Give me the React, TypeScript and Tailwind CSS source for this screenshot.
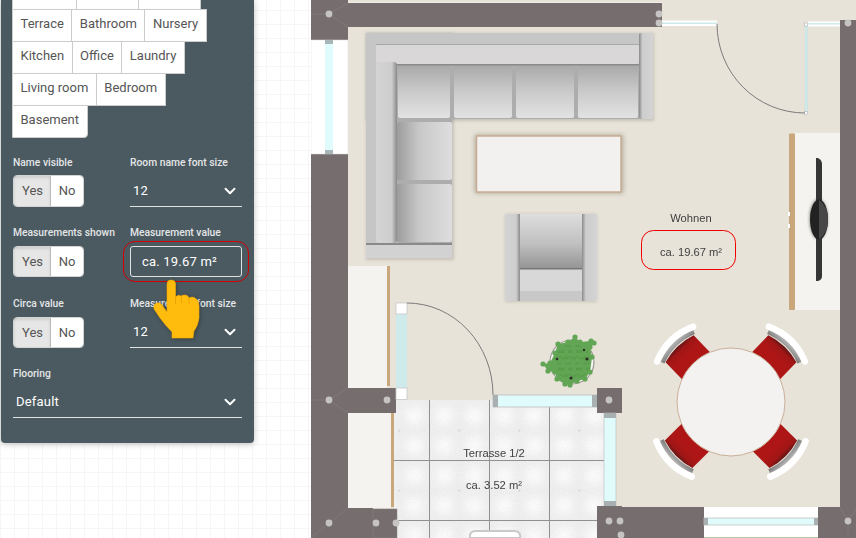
import React from "react";
import { ChevronDown } from "lucide-react";

const rows: { label: string; w?: string; cls?: string }[][] = [
  [
    { label: "", w: "w-[65px]", cls: "bg-[#e6e6e6]" },
    { label: " ", w: "w-[63px]" },
    { label: "  ", w: "w-[63px]" },
  ],
  [{ label: "Terrace" }, { label: "Bathroom" }, { label: "Nursery" }],
  [{ label: "Kitchen" }, { label: "Office" }, { label: "Laundry" }],
  [{ label: "Living room" }, { label: "Bedroom" }],
  [{ label: "Basement", cls: "rounded-br" }],
];

function Toggle({ tall }: { tall?: boolean }) {
  return (
    <div className={`flex w-[71px] overflow-hidden rounded border border-[#d4d4d4] text-[13px] text-[#555] ${tall ? "h-[32px]" : "h-[31px]"}`}>
      <div className="flex w-[37px] items-center justify-center border-r border-[#bbb] bg-[#e6e6e6] pl-px shadow-[inset_0_2px_3px_rgba(0,0,0,0.1)]">Yes</div>
      <div className="flex flex-1 items-center justify-center bg-white">No</div>
    </div>
  );
}

function Label({ children }: { children: React.ReactNode }) {
  return <div className="h-[13px] text-[10.3px] leading-[13px] font-medium whitespace-nowrap text-[#e4e6e7]">{children}</div>;
}

function Select({ value, tall }: { value: string; tall?: boolean }) {
  return (
    <div className={`flex items-center justify-between border-b border-[#dfe2e3] pr-[3px] pl-[3px] text-[13px] tracking-[0.2px] text-white ${tall ? "h-[32px]" : "h-[31px]"}`}>
      <span>{value}</span>
      <ChevronDown size={18} strokeWidth={2.6} className="text-white" />
    </div>
  );
}

const Wall = "#756d6e";
const Floor = "#e7e3d9";
const Board = "#f4f3ef";
const Wood = "#c9a67c";
const Glass = "#e0fbfb";
const Dot = "#c6c3c3";
const Join = "#8b8485";

function Chair({ angle }: { angle: number }) {
  return (
    <g transform={`translate(731 402) rotate(${angle})`}>
      <path d="M-19.5 -40 L-19.5 -74 Q0 -80 19.5 -74 L19.5 -40 Z" fill="url(#red)" />
      <path d="M-22 -76 Q0 -84.5 22 -76" fill="none" stroke="url(#chairGrey)" strokeWidth="4.5" />
      <path d="M-25 -80.5 Q0 -91.5 25 -80.5" fill="none" stroke="#ffffff" strokeWidth="6.5" strokeLinecap="round" />
    </g>
  );
}

const plantPoints: [number, number][] = [
  [575, 337], [580, 342], [591, 341], [594, 343], [590, 347], [592, 357], [590, 372], [585, 379], [577, 381], [570, 385],
  [565, 384], [557, 379], [555, 372], [548, 371], [543, 364], [550, 363], [555, 353], [558, 344], [568, 342],
];
const plantOutline = `M${plantPoints.map(([x, y]) => `${x} ${y}`).join(" L")} Z`;

const leafDots: [number, number][] = [];
for (let i = 0; i < 13; i++) {
  for (let j = 0; j < 13; j++) {
    const x = 549 + i * 3.6 + ((j * j * 7 + i * 3) % 5) * 0.7;
    const y = 341 + j * 3.5 + ((i * i * 5 + j * 2) % 5) * 0.7;
    const dx = x - 572;
    const dy = y - 362;
    if (dx * dx + dy * dy < 340) leafDots.push([x, y]);
  }
}

function FloorPlan() {
  const dots: [number, number][] = [
    [329, 14], [659, 14], [659, 23], [848, 23], [329, 400], [387, 400], [609, 400], [329, 523], [376, 523], [396, 523],
    [609, 521], [620, 521], [621, 535], [848, 521],
  ];
  return (
    <svg viewBox="311 0 545 538" className="ml-[57px] h-[538px] w-[545px] shrink-0">
      <defs>
        <filter id="fine" x="-5%" y="-5%" width="110%" height="110%"><feGaussianBlur stdDeviation="0.4" /></filter>
        <filter id="tiny" x="-5%" y="-5%" width="110%" height="110%"><feGaussianBlur stdDeviation="0.35" /></filter>
        <filter id="sh" x="-10%" y="-10%" width="120%" height="120%"><feGaussianBlur stdDeviation="1.5" /></filter>
        <filter id="soft" x="-20%" y="-20%" width="140%" height="140%"><feGaussianBlur stdDeviation="2.5" /></filter>
        <filter id="blob" x="-50%" y="-50%" width="200%" height="200%"><feGaussianBlur stdDeviation="5" /></filter>
        <filter id="noise" x="0" y="0" width="100%" height="100%">
          <feTurbulence type="fractalNoise" baseFrequency="0.8" numOctaves="2" seed="4" />
          <feColorMatrix values="0 0 0 0 0.5  0 0 0 0 0.5  0 0 0 0 0.5  0.5 0 0 0 -0.12" />
        </filter>
        <linearGradient id="cushV" x1="0" y1="0" x2="0" y2="1">
          <stop offset="0" stopColor="#a8a8a8" /><stop offset="0.5" stopColor="#cacaca" /><stop offset="1" stopColor="#e2e2e2" />
        </linearGradient>
        <linearGradient id="cushH" x1="0" y1="0" x2="1" y2="0">
          <stop offset="0" stopColor="#9c9c9c" /><stop offset="0.4" stopColor="#c8c8c8" /><stop offset="1" stopColor="#dedede" />
        </linearGradient>
        <linearGradient id="seat" x1="0" y1="0" x2="0" y2="1">
          <stop offset="0" stopColor="#dedede" /><stop offset="0.55" stopColor="#c0c0c0" /><stop offset="1" stopColor="#959595" />
        </linearGradient>
        <linearGradient id="armL" x1="0" y1="0" x2="1" y2="0">
          <stop offset="0" stopColor="#d5d4d4" /><stop offset="0.75" stopColor="#cdcdcd" /><stop offset="1" stopColor="#8a8a8a" />
        </linearGradient>
        <linearGradient id="armR" x1="1" y1="0" x2="0" y2="0">
          <stop offset="0" stopColor="#d5d4d4" /><stop offset="0.75" stopColor="#cdcdcd" /><stop offset="1" stopColor="#8a8a8a" />
        </linearGradient>
        <linearGradient id="red" gradientUnits="userSpaceOnUse" x1="0" y1="-80" x2="0" y2="-40">
          <stop offset="0" stopColor="#3a1010" /><stop offset="0.2" stopColor="#a01414" /><stop offset="0.4" stopColor="#ae1616" /><stop offset="1" stopColor="#ae1616" />
        </linearGradient>
        <linearGradient id="chairGrey" gradientUnits="userSpaceOnUse" x1="0" y1="-86" x2="0" y2="-74">
          <stop offset="0" stopColor="#d4d4d4" /><stop offset="1" stopColor="#777" />
        </linearGradient>
        <pattern id="tile" patternUnits="userSpaceOnUse" width="60" height="60" x="429.3" y="400.6">
          <rect width="60" height="60" fill="#f0f0f0" />
          <circle cx="15" cy="15" r="9" fill="#fff" filter="url(#blob)" />
          <circle cx="45" cy="15" r="9" fill="#fff" filter="url(#blob)" />
          <circle cx="15" cy="45" r="9" fill="#fff" filter="url(#blob)" />
          <circle cx="45" cy="45" r="9" fill="#fff" filter="url(#blob)" />
          <circle cx="30" cy="30" r="0.7" fill="#b0b0b0" />
        </pattern>
      </defs>

      <rect x="348" y="0" width="508" height="538" fill={Floor} />

      {/* terrace */}
      <rect x="394" y="400" width="210" height="138" fill="url(#tile)" />
      <rect x="394" y="400" width="210" height="138" filter="url(#noise)" opacity="0.45" />
      <g stroke="#909090" strokeWidth="1">
        <path d="M429.5 400V538M489.5 400V538M549.5 400V538" />
        <path d="M394 460.5H604M397 520.5H597" />
      </g>
      <path d="M470 538 Q469 531 476 531 H514 Q521 531 520 538Z" fill="#fff" stroke="#c9c9c9" strokeWidth="2" />

      {/* walls */}
      <rect x="348" y="2.5" width="314" height="0.8" fill="#fff" opacity="0.7" />
      <rect x="311" y="3" width="351" height="24" fill={Wall} />
      <rect x="311" y="0" width="37" height="538" fill={Wall} />
      <path d="M348 3 L329 14 L348 27 M311 14 L329 14" fill="none" stroke={Join} strokeWidth="0.5" />
      <path d="M348 388 L329 400 L348 413 M311 400 L329 400 M311 538 L329 523 L348 508" fill="none" stroke={Join} strokeWidth="0.5" />

      {/* left window */}
      <rect x="311" y="40" width="37" height="114" fill="#fff" stroke="#ddd" strokeWidth="0.5" />
      <rect x="325" y="40" width="8" height="114" fill={Glass} />
      <rect x="325" y="40" width="8" height="4" fill="#a9b6b8" />
      <rect x="325" y="150" width="8" height="4" fill="#a9b6b8" />

      {/* sofa */}
      <rect x="366" y="33" width="288" height="88" fill="#6a6455" opacity="0.25" filter="url(#sh)" />
      <rect x="366" y="33" width="88" height="227" fill="#6a6455" opacity="0.25" filter="url(#sh)" />
      <g filter="url(#fine)">
        <rect x="366" y="33" width="287" height="86" fill="#c6c6c6" />
        <rect x="366" y="33" width="86" height="225" fill="#c6c6c6" />
        <rect x="397" y="64" width="242" height="55" fill="#adadad" />
        <rect x="397" y="64" width="55" height="180" fill="#adadad" />
        <rect x="398" y="65" width="52" height="53" rx="2" fill="url(#cushV)" />
        <rect x="454" y="65" width="58" height="53" rx="2" fill="url(#cushV)" />
        <rect x="516" y="65" width="58" height="53" rx="2" fill="url(#cushV)" />
        <rect x="578" y="65" width="60" height="53" rx="2" fill="url(#cushV)" />
        <rect x="397" y="122" width="55" height="58" rx="2" fill="url(#cushH)" />
        <rect x="397" y="184" width="55" height="58" rx="2" fill="url(#cushH)" />
        <rect x="376" y="44" width="263" height="20" rx="2" fill="#d9d7d8" />
        <rect x="376" y="44" width="263" height="1" fill="#a8a8a8" />
        <rect x="376" y="64" width="263" height="1.5" fill="#8a8a8a" />
        <rect x="376" y="62" width="21" height="181" rx="3" fill="url(#armL)" />
        <rect x="639" y="33" width="14" height="86" rx="2" fill="url(#armR)" />
        <rect x="366" y="243" width="86" height="15" fill="#d3d2d2" />
        <rect x="366" y="243" width="86" height="2" fill="#8a8a8a" />
      </g>

      {/* coffee table */}
      <rect x="475" y="135" width="148" height="58" fill="#7a7258" opacity="0.55" filter="url(#soft)" />
      <rect x="476.5" y="136" width="144.5" height="56" fill="#f2f1ef" stroke="#c8ac94" strokeWidth="1.5" />

      {/* armchair */}
      <rect x="505" y="214" width="92" height="88" rx="2" fill="#6a6455" opacity="0.25" filter="url(#sh)" />
      <g filter="url(#fine)">
        <rect x="505" y="214" width="92" height="87" rx="2" fill="#cdcdcd" />
        <rect x="520" y="214" width="62" height="54" fill="url(#seat)" />
        <rect x="520" y="268" width="62" height="23" fill="#d8d8d8" />
        <rect x="520" y="268" width="62" height="1.5" fill="#777" />
        <rect x="520" y="291" width="62" height="10" fill="#c8c8c8" />
        <rect x="505" y="214" width="15" height="87" fill="url(#armL)" />
        <rect x="582" y="214" width="15" height="87" fill="url(#armR)" />
      </g>

      {/* lower-left cupboards */}
      <rect x="348" y="266" width="39" height="122" fill={Board} />
      <rect x="387" y="266" width="3" height="120" fill={Wood} />
      <rect x="348" y="388" width="48" height="25" fill={Wall} />
      <rect x="348" y="413" width="43" height="95" fill={Board} />
      <rect x="391" y="413" width="3" height="94" fill={Wood} />
      <rect x="348" y="508" width="25" height="30" fill={Wall} />
      <rect x="373" y="509" width="24" height="29" fill={Wall} stroke={Join} strokeWidth="0.5" />

      {/* lower door */}
      <rect x="396" y="303" width="11" height="97" fill="#cfeaea" />
      <rect x="396" y="303" width="11" height="11" fill="#fff" stroke="#c9c9c9" strokeWidth="0.8" />
      <rect x="396" y="388" width="11" height="11.5" fill="#fff" stroke="#c9c9c9" strokeWidth="0.8" />
      <path d="M407 303 A86 92 0 0 1 493 395" fill="none" stroke="#7f7a7a" strokeWidth="1" />

      {/* terrace top window */}
      <rect x="493" y="395" width="104" height="12" fill={Glass} stroke="#bdbdbd" strokeWidth="0.8" />
      <rect x="493" y="395" width="5" height="12" fill="#a9b0b2" />
      <rect x="592" y="395" width="5" height="12" fill="#a9b0b2" />
      <rect x="597" y="388" width="25" height="25" fill={Wall} />

      {/* terrace right window */}
      <rect x="604" y="413" width="12" height="93" fill={Glass} stroke="#bdbdbd" strokeWidth="0.6" />
      <rect x="604" y="413" width="12" height="5" fill="#a9b0b2" />
      <rect x="604" y="501" width="12" height="5" fill="#a9b0b2" />

      {/* bottom wall */}
      <rect x="597" y="506" width="25" height="32" fill={Wall} />
      <rect x="620" y="507" width="84" height="31" fill={Wall} />
      <rect x="704" y="507" width="114" height="30" fill="#fff" />
      <rect x="704" y="537" width="114" height="1" fill="#b7c6a3" />
      <rect x="704" y="518" width="114" height="7" fill={Glass} stroke="#bfc4c4" strokeWidth="0.8" />
      <rect x="704" y="518" width="4" height="7" fill="#a9b0b2" />
      <rect x="814" y="518" width="4" height="7" fill="#a9b0b2" />
      <rect x="818" y="507" width="38" height="31" fill={Wall} />

      {/* right wall */}
      <rect x="840" y="20" width="16" height="500" fill={Wall} />
      <path d="M840 507 L848 521 L856 510 M848 521 V538" fill="none" stroke={Join} strokeWidth="0.5" />

      {/* top windows and door */}
      <rect x="662" y="20.5" width="55" height="5.5" fill="#fff" />
      <rect x="662" y="22.5" width="55" height="1.5" fill="#cfeaea" />
      <rect x="808" y="21.5" width="32" height="5" fill="#fff" />
      <rect x="808" y="23" width="32" height="1.5" fill="#cfeaea" />
      <rect x="805" y="24" width="2.5" height="89" fill="#cdeaea" stroke="#c8dcdc" strokeWidth="0.4" />
      <rect x="804.5" y="23" width="3" height="3" fill="#fff" stroke="#aaa" strokeWidth="0.5" />
      <rect x="804.5" y="111.5" width="3" height="3" fill="#fff" stroke="#aaa" strokeWidth="0.5" />
      <path d="M717 24 A88 89 0 0 0 805 113" fill="none" stroke="#7f7a7a" strokeWidth="1" />

      {/* TV unit */}
      <rect x="795" y="133" width="45" height="177" fill={Board} />
      <rect x="789" y="133.5" width="6" height="176.5" rx="1" fill={Wood} />
      <rect x="788" y="212" width="2" height="4" fill="#fff" />
      <rect x="788" y="224" width="2" height="4" fill="#fff" />
      <ellipse cx="818.5" cy="219" rx="9" ry="20" fill="#1f1f1f" filter="url(#sh)" opacity="0.5" />
      <g filter="url(#tiny)">
        <path d="M816 158 H818 Q822 160 822 164 V277 Q821 281 817 281 H816 Z" fill="#353535" />
        <ellipse cx="819" cy="219.5" rx="9" ry="20" fill="#242424" />
        <path d="M819 200 Q828 206 828 219.5 Q828 233 819 239.5Z" fill="#474747" />
      </g>

      {/* table and chairs */}
      <g filter="url(#tiny)">
        <Chair angle={-44} /><Chair angle={44} /><Chair angle={-135} /><Chair angle={135} />
      </g>
      <circle cx="731" cy="402" r="54" fill="#f3f2f0" stroke="#c9ae98" strokeWidth="1" />

      {/* plant */}
      <circle cx="572" cy="362" r="22" fill="#f4f4f4" stroke="#9a9a92" strokeWidth="1.2" />
      <g filter="url(#tiny)">
        <path d={plantOutline} fill="#62a654" />
        {plantPoints.map(([x, y], i) => (<circle key={`o${i}`} cx={x} cy={y} r="2.6" fill="#62a654" />))}
        {leafDots.map(([x, y], i) => (<circle key={i} cx={x} cy={y} r="0.9" fill="#559a48" />))}
      </g>
      <circle cx="557" cy="359" r="1.3" fill="#2c2c24" /><circle cx="587" cy="359" r="1.6" fill="#2c2c24" />
      <circle cx="571" cy="378" r="1.6" fill="#2c2c24" /><circle cx="584" cy="350" r="1.2" fill="#2c2c24" />

      {dots.map(([x, y], i) => (<circle key={`w${i}`} cx={x} cy={y} r="3.4" fill={Dot} />))}

      <g fontFamily="'Liberation Sans', sans-serif" fill="#3f3f3f" textAnchor="middle" fontSize="11.2">
        <text x="691" y="222">Wohnen</text>
        <rect x="641.5" y="230.5" width="94" height="39" rx="12" fill="none" stroke="#f00000" strokeWidth="1" />
        <text x="691" y="256">ca. 19.67 m²</text>
        <text x="494" y="457">Terrasse 1/2</text>
        <text x="494" y="489">ca. 3.52 m²</text>
      </g>
    </svg>
  );
}

export default function App() {
  return (
    <div
      className="relative flex h-[538px] w-[856px] overflow-hidden bg-white bg-[linear-gradient(to_right,#f6f6f6_1px,transparent_1px),linear-gradient(to_bottom,#f6f6f6_1px,transparent_1px)] bg-[size:14px_14px] bg-[position:0_10px]"
      style={{ fontFamily: "Roboto, 'Liberation Sans', sans-serif" }}
    >
      <aside className="ml-px h-[443px] w-[253px] shrink-0 overflow-hidden rounded-b bg-[#4b5a61] pl-[11px] shadow-[0_1px_6px_rgba(0,0,0,0.25)]">
        <div className="-mt-[23px] flex flex-col">
          {rows.map((row, i) => (
            <div key={i} className="-mb-px flex h-[33px]">
              {row.map((b, j) => (
                <div
                  key={b.label + j}
                  className={`flex items-center justify-center border border-[#cccccc] bg-white px-[7.5px] pb-[4px] text-[13px] whitespace-nowrap text-[#555] ${j > 0 ? "-ml-px" : ""} ${b.w ?? ""} ${b.cls ?? ""}`}
                >
                  {b.label}
                </div>
              ))}
            </div>
          ))}
        </div>

        <div className="mt-[19px] grid w-[230px] grid-cols-[118px_112px]">
          <div className="pl-px">
            <Label>Name visible</Label>
            <div className="mt-[6px]"><Toggle tall /></div>
          </div>
          <div>
            <Label>Room name font size</Label>
            <div className="mt-[6px]"><Select value="12" tall /></div>
          </div>

          <div className="mt-[19px] pl-px">
            <Label>Measurements shown</Label>
            <div className="mt-[7px]"><Toggle /></div>
          </div>
          <div className="mt-[19px]">
            <Label>Measurement value</Label>
            <div className="relative mt-[7px] flex h-[31px] items-center rounded-[3px] border border-[#dfe2e3] pl-[11px] text-[13px] tracking-[0.2px] text-white">
              ca. 19.67 m²
              <div className="absolute -top-[6px] -left-[8px] h-[41px] w-[126px] rounded-[12px] border border-[#d40000]" />
            </div>
          </div>

          <div className="mt-[20px] pl-px">
            <Label>Circa value</Label>
            <div className="mt-[7px]"><Toggle /></div>
          </div>
          <div className="mt-[20px]">
            <Label>Measurement font size</Label>
            <div className="mt-[7px]"><Select value="12" /></div>
          </div>

          <div className="col-span-2 mt-[19px] pl-px">
            <Label>Flooring</Label>
            <div className="mt-[6px]"><Select value="Default" tall /></div>
          </div>
        </div>
      </aside>

      <FloorPlan />

      <svg viewBox="150 275 56 70" className="absolute top-[275px] left-[150px] h-[70px] w-[56px] drop-shadow-[1px_1px_2px_rgba(0,0,0,0.3)]">
        <path
          d="M167 284 Q167 280 171 280 Q175.5 280 175.5 284 L175.5 297 Q178 294 181 296 Q182 295 185 295 Q188 295 189 298 Q192 296 195 298 Q199 300 199 306 L199 318 Q198 326 194 331 L193 338 L172 338 L172 332 Q165 325 160 318 L154 309 Q153 304 157 303 Q160 302 162 305 L167 312 Z"
          fill="#ffbc0d"
          stroke="#f4a800"
          strokeWidth="0.6"
        />
        <path d="M175.5 297 V304 M181.5 296.5 V303 M189 298 V304" fill="none" stroke="#eda200" strokeWidth="0.9" />
      </svg>
    </div>
  );
}
